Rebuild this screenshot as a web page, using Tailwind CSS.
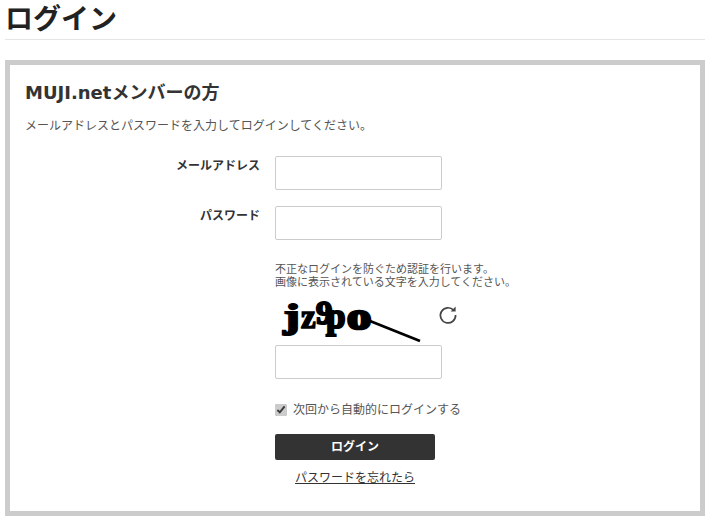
<!DOCTYPE html>
<html lang="ja">
<head>
<meta charset="utf-8">
<script src="https://cdn.jsdelivr.net/npm/@tailwindcss/browser@4"></script>
</head>
<body class="bg-white text-[#333] font-['DejaVu_Sans','Noto_Sans_CJK_JP',sans-serif] overflow-hidden">
<div class="w-[710px] h-[521px] px-[5px]">
  <h1 class="h-[40px] border-b border-[#e5e5e5] text-[28px] leading-[40px] font-bold text-[#222]">ログイン</h1>
  <section class="mt-[20px] w-[700px] h-[456px] border-[5px] border-[#ccc] px-[15px] pt-[16px]">
    <h2 class="text-[18px] leading-[24px] font-bold">MUJI.netメンバーの方</h2>
    <p class="mt-[12px] text-[12px] leading-[18px] text-[#555]">メールアドレスとパスワードを入力してログインしてください。</p>
    <form class="mt-[21px]">
      <div class="flex h-[34px]">
        <label class="w-[235px] text-right text-[12px] leading-[18px] pt-[1px] font-bold">メールアドレス</label>
        <input type="text" class="ml-[15px] w-[167px] h-[34px] border border-[#ccc] rounded-[2px]">
      </div>
      <div class="flex h-[34px] mt-[16px]">
        <label class="w-[235px] text-right text-[12px] leading-[18px] pt-[1px] font-bold">パスワード</label>
        <input type="password" class="ml-[15px] w-[167px] h-[34px] border border-[#ccc] rounded-[2px]">
      </div>
      <div class="ml-[250px]">
        <p class="mt-[23px] text-[11px] leading-[13px] text-[#555]">不正なログインを防ぐため認証を行います。<br>画像に表示されている文字を入力してください。</p>
        <div class="flex h-[54px] mt-[2px]">
          <svg width="150" height="54" viewBox="0 0 150 54" class="block">
            <g font-family="Liberation Serif" font-weight="700" fill="#000" stroke="#000">
              <text x="15" y="37" font-size="34" stroke-width="2.2" transform="translate(-8 0) scale(1.4 1) translate(-3 0)">j</text>
              <text x="26" y="37" font-size="33" stroke-width="1.6">z</text>
              <text x="41" y="33" font-size="33" stroke-width="2.2">9</text>
              <text x="51" y="37" font-size="35" stroke-width="2.2">p</text>
              <text transform="translate(72 38) scale(1.35 1.05)" font-size="36" stroke-width="2.6">o</text>
            </g>
            <path d="M95 30 L145 50" stroke="#000" stroke-width="2.6" fill="none"/>
          </svg>
          <svg width="20" height="20" viewBox="0 0 20 20" class="ml-[13px] mt-[14px]" fill="none" stroke="#444" stroke-width="1.7">
            <path d="M15.6 5.2 A7.6 7.6 0 1 0 17.6 10"/>
            <path d="M17.6 1.6 V6.6 H12.6 Z" fill="#444" stroke="none"/>
          </svg>
        </div>
        <input type="text" class="block w-[167px] h-[34px] border border-[#ccc] rounded-[2px]">
        <label class="flex items-center h-[18px] mt-[22px] text-[12px] text-[#555]">
          <input type="checkbox" checked class="w-[12px] h-[12px] m-0 mr-[1px] accent-[#ccc]">
          <span class="ml-[5px]">次回から自動的にログインする</span>
        </label>
        <button type="button" class="block mt-[15px] w-[160px] h-[26px] bg-[#333] rounded-[2px] text-white text-[12px] font-bold">ログイン</button>
        <a class="block w-[160px] mt-[9px] text-center text-[12px] leading-[18px] underline">パスワードを忘れたら</a>
      </div>
    </form>
  </section>
</div>
</body>
</html>
